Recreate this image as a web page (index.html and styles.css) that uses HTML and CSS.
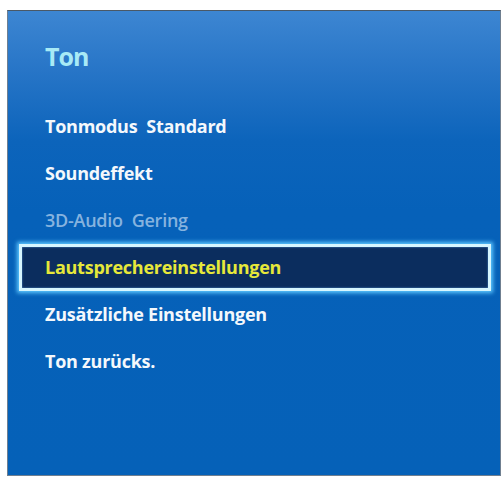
FILE: index.html
```html
<!DOCTYPE html>
<html lang="de">
<head>
<meta charset="utf-8">
<link rel="stylesheet" href="styles.css">
</head>
<body>
<div class="panel">
  <div class="title">Ton</div>
  <ul class="menu">
    <li class="item">Tonmodus&nbsp; Standard</li>
    <li class="item">Soundeffekt</li>
    <li class="item disabled">3D-Audio&nbsp; Gering</li>
    <li class="item selected">Lautsprechereinstellungen</li>
    <li class="item">Zusätzliche Einstellungen</li>
    <li class="item">Ton zurücks.</li>
  </ul>
</div>
</body>
</html>
```
FILE: styles.css
```css
html, body {
  margin: 0;
  padding: 0;
  background: #ffffff;
}
body {
  padding: 10px 3px 2px 7px;
  font-family: "Open Sans", "DejaVu Sans", sans-serif;
}
.panel {
  box-sizing: border-box;
  width: 494px;
  height: 466px;
  border: 1px solid #6f7f90;
  border-top-color: #4a5866;
  background: linear-gradient(to bottom, #3d86d2 0px, #2775c7 60px, #0c64bb 130px, #0661b9 200px, #0561b8 466px);
  padding: 28px 0 0 0;
}
.title {
  padding-left: 37px;
  font-size: 25px;
  font-weight: 700;
  color: #a8eaf6;
  line-height: 34px;
  height: 64px;
  letter-spacing: -1px;
}
.menu {
  list-style: none;
  margin: 0;
  padding: 0 9px 0 11px;
}
.item {
  height: 47px;
  line-height: 47px;
  padding-left: 26px;
  font-size: 18px;
  font-weight: 700;
  color: #f4f8fc;
  box-sizing: border-box;
  letter-spacing: -0.25px;
}
.disabled {
  color: #86b3df;
  font-weight: 600;
}
.selected {
  color: #e6e83a;
  background: #0b2d5e;
  border: 3px solid #d6f6ff;
  box-shadow: 0 0 4px 2px #5ec8ff, inset 0 0 2px #5a9ad8;
  line-height: 41px;
  padding-left: 23px;
}
```
